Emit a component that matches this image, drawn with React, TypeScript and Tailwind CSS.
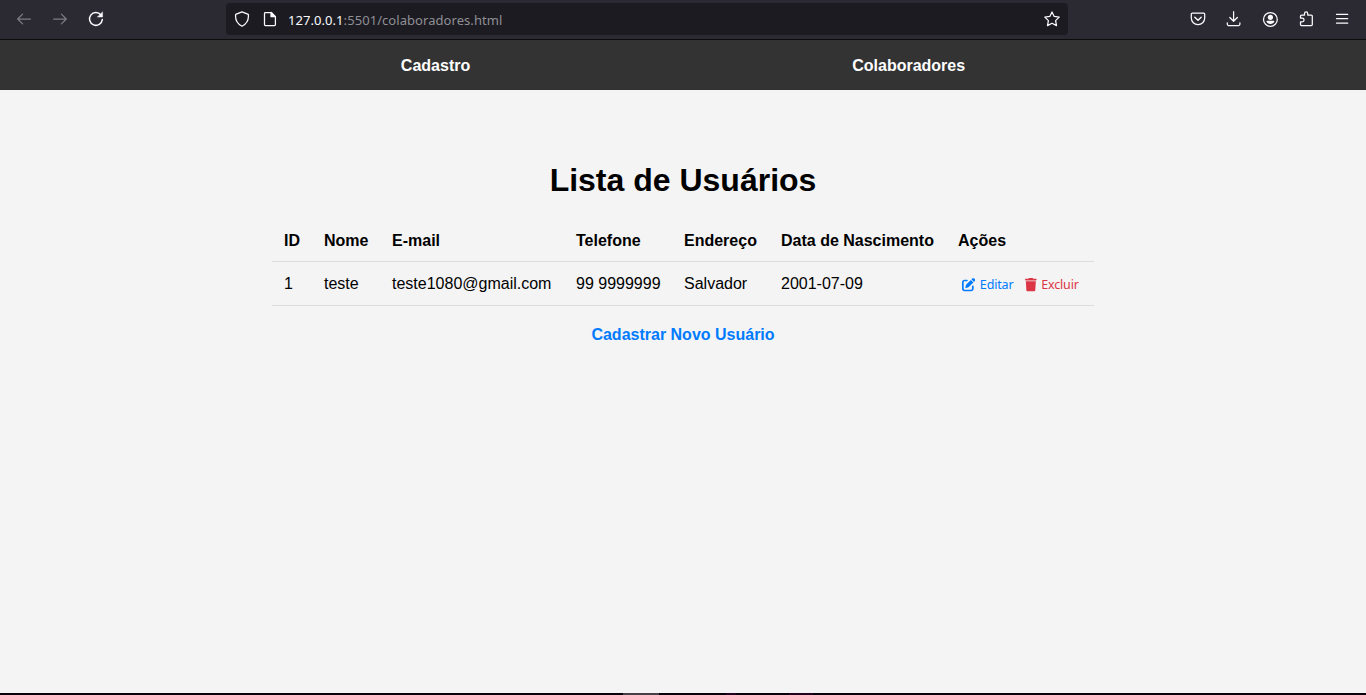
import React from "react";
import { FaPenToSquare, FaTrash } from "react-icons/fa6";

function Icon({ className = "", children }: { className?: string; children: React.ReactNode }) {
  return (
    <svg
      viewBox="0 0 16 16"
      className={`size-4 shrink-0 ${className}`}
      fill="none"
      stroke="currentColor"
      strokeWidth="1.25"
      strokeLinecap="round"
      strokeLinejoin="round"
    >
      {children}
    </svg>
  );
}

function Toolbar() {
  return (
    <header className="flex h-10 shrink-0 items-center border-b border-[#0c0c0d] bg-[#2b2a33] pr-4 pl-4 text-[#fbfbfe]">
      <div className="mb-px flex w-[210px] gap-5">
        <Icon className="text-[#7c7b82]">
          <path d="M14.4 8H1.8M6.6 3.1 1.7 8l4.9 4.9" />
        </Icon>
        <Icon className="text-[#7c7b82]">
          <path d="M1.6 8h12.6M9.4 3.1 14.3 8l-4.9 4.9" />
        </Icon>
        <Icon>
          <path d="M12.9 3.9A6.4 6.4 0 1 0 14.3 8.6" strokeWidth="1.5" />
          <path d="M14.6 1v5.1H9.5z" fill="currentColor" strokeWidth="0.4" />
        </Icon>
      </div>
      <div className="mb-px flex h-8 w-[842px] items-center rounded bg-[#1c1b22] px-2">
        <Icon>
          <path d="M8 .8 14.3 3.3C15 8.8 12.8 12.8 8 15.3 3.2 12.8 1 8.8 1.7 3.3z" />
        </Icon>
        <Icon className="ml-3">
          <path d="M3.4 1.5h5.9l4.1 4.1v8a.9.9 0 0 1-.9.9H3.4a.9.9 0 0 1-.9-.9V2.4a.9.9 0 0 1 .9-.9z" />
          <path d="M9 1.5v4.2h4.2z" fill="currentColor" />
        </Icon>
        <span className="mt-[3px] ml-2.5 grow whitespace-nowrap font-['Noto_Sans',sans-serif] text-[13px] tracking-[0.06px] text-[#8f8f94]">
          <span className="text-[#fbfbfe]">127.0.0.1</span>:5501/colaboradores.html
        </span>
        <Icon>
          <path d="m8 .9 2.2 4.5 5 .7-3.6 3.5.9 5L8 12.3l-4.5 2.3.9-5L.8 6.1l5-.7z" />
        </Icon>
      </div>
      <div className="mb-px ml-auto flex gap-5">
        <Icon>
          <path d="M2.3 2.2h11.4a1 1 0 0 1 1 1V7A6.7 6.7 0 0 1 1.3 7V3.2a1 1 0 0 1 1-1z" />
          <path d="M4.8 6.2 8 9.2l3.2-3" strokeWidth="1.4" />
        </Icon>
        <Icon>
          <path d="M7.6 .7v9.5M3.8 6.5l3.8 3.8 3.8-3.8M1.3 11.8v1.3a1.4 1.4 0 0 0 1.4 1.4h9.8a1.4 1.4 0 0 0 1.4-1.4v-1.3" />
        </Icon>
        <Icon>
          <circle cx="8.4" cy="8.4" r="6.9" />
          <circle cx="8.4" cy="6.3" r="2.6" fill="currentColor" stroke="none" />
          <path d="M5.2 9.8h6.4a.8.8 0 0 1 .8.8c-.6 1.5-2 2.4-4 2.4s-3.4-.9-4-2.4a.8.8 0 0 1 .8-.8z" fill="currentColor" stroke="none" />
        </Icon>
        <Icon>
          <path d="M2.5 7.2V5a1 1 0 0 1 1-1h3V2.5a1.6 1.6 0 0 1 3.2 0V4h3.6a1 1 0 0 1 1 1v8.6a1 1 0 0 1-1 1H3.5a1 1 0 0 1-1-1v-2.7h1.7a1.85 1.85 0 0 0 0-3.7z" />
        </Icon>
        <Icon>
          <path d="M2.5 3.4h11.2M2.5 7.6h11.2M2.5 12.2h11.2" />
        </Icon>
      </div>
    </header>
  );
}

const columns = ["ID", "Nome", "E-mail", "Telefone", "Endereço", "Data de Nascimento", "Ações"];
const user = ["1", "teste", "teste1080@gmail.com", "99 9999999", "Salvador", "2001-07-09"];

export default function App() {
  return (
    <div className="flex h-[695px] flex-col overflow-hidden bg-[#f4f4f4] font-['Liberation_Sans',Arial,sans-serif] text-base text-black">
      <Toolbar />
      <nav className="flex h-[50px] shrink-0 items-center justify-center gap-[382px] bg-[#333333] pt-0.5 font-bold text-white">
        <a href="#">Cadastro</a>
        <a href="#">Colaboradores</a>
      </nav>
      <main className="flex grow flex-col items-center pt-[72px]">
        <h1 className="text-[32px] leading-[37px] font-bold">Lista de Usuários</h1>
        <table className="mt-[18px] w-[822px] table-fixed border-collapse text-left leading-[18px]">
          <colgroup>
            <col className="w-[40px]" />
            <col className="w-[68px]" />
            <col className="w-[184px]" />
            <col className="w-[108px]" />
            <col className="w-[97px]" />
            <col className="w-[177px]" />
            <col className="w-[148px]" />
          </colgroup>
          <thead>
            <tr className="h-[44px] border-b border-[#dddddd]">
              {columns.map((c) => (
                <th key={c} className="px-3 pt-1 pb-0 font-bold whitespace-nowrap">{c}</th>
              ))}
            </tr>
          </thead>
          <tbody>
            <tr className="h-[44px] border-b border-[#dddddd]">
              {user.map((v) => (
                <td key={v} className="px-3 pt-0.5 pb-0 whitespace-nowrap">{v}</td>
              ))}
              <td className="pt-1 pb-0 pl-4">
                <div className="flex items-center font-['Noto_Sans',sans-serif] text-[12.5px] tracking-[-0.15px]">
                  <button className="flex items-center gap-[4.5px] text-[#007bff]">
                    <FaPenToSquare className="size-[13.33px]" />
                    Editar
                  </button>
                  <button className="ml-3 flex items-center gap-1 text-[#dc3545]">
                    <FaTrash className="h-[13.33px] w-[11.67px]" />
                    Excluir
                  </button>
                </div>
              </td>
            </tr>
          </tbody>
        </table>
        <a href="#" className="mt-[20px] leading-[18px] font-bold text-[#007bff]">Cadastrar Novo Usuário</a>
      </main>
      <footer className="flex h-0.5 shrink-0 bg-[#09000b]">
        <div className="ml-[623px] w-9 bg-[#463f46]" />
        <div className="ml-[67px] w-2.5 bg-[#25001f]" />
        <div className="ml-[53px] w-6 bg-[#25001f]" />
      </footer>
    </div>
  );
}
